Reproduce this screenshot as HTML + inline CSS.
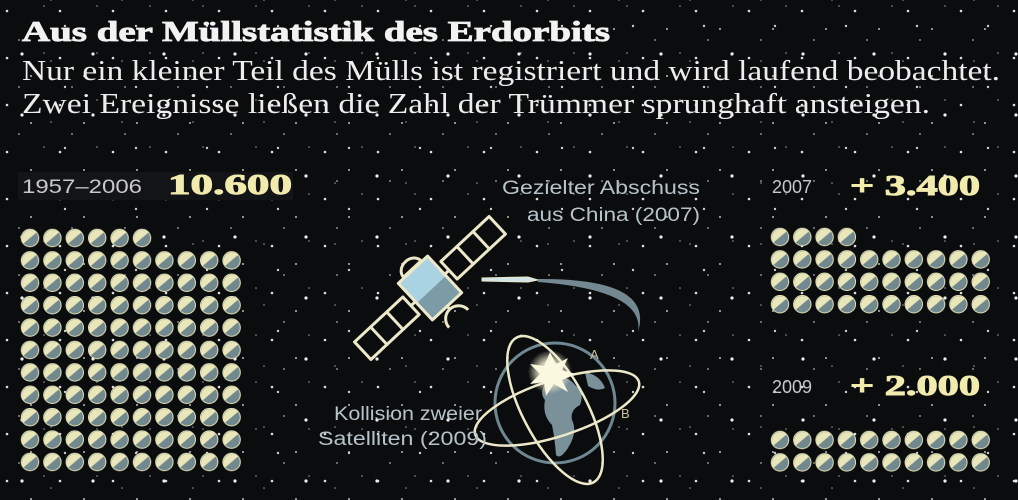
<!DOCTYPE html>
<html><head><meta charset="utf-8"><style>
html,body{margin:0;padding:0;background:#0a0c0e;}
svg{display:block}
</style></head><body>
<svg width="1018" height="500" viewBox="0 0 1018 500" xmlns="http://www.w3.org/2000/svg">
<defs>
<g id="dot">
<circle cx="11.2" cy="11.2" r="8.7" fill="#72888f" stroke="#e6e3b6" stroke-width="1"/>
<path d="M4.6 16.8 A8.7 8.7 0 0 1 17.8 5.6 Z" fill="#e9e6b9"/>
</g>
<pattern id="pL" x="18.8" y="226.8" width="22.4" height="22.4" patternUnits="userSpaceOnUse"><use href="#dot"/></pattern>
<pattern id="pR" x="768.8" y="225.8" width="22.3" height="22.4" patternUnits="userSpaceOnUse"><use href="#dot"/></pattern>
<pattern id="pR2" x="768.8" y="428.8" width="22.3" height="22.4" patternUnits="userSpaceOnUse"><use href="#dot"/></pattern>
<pattern id="stars1" x="0" y="0" width="53" height="47" patternUnits="userSpaceOnUse">
<circle cx="7" cy="11" r="1.3" fill="#ddd"/><circle cx="31" cy="29" r="1" fill="#bbb"/><circle cx="44" cy="6" r="0.8" fill="#999"/><circle cx="19" cy="40" r="0.9" fill="#aaa"/>
</pattern>
<pattern id="stars2" x="13" y="9" width="71" height="61" patternUnits="userSpaceOnUse">
<circle cx="9" cy="45" r="1.6" fill="#eee"/><circle cx="52" cy="17" r="1.2" fill="#ccc"/><circle cx="38" cy="52" r="0.8" fill="#999"/>
</pattern>
<radialGradient id="flash"><stop offset="0" stop-color="#fffdf0"/><stop offset="0.5" stop-color="#fbf6d8" stop-opacity="0.8"/><stop offset="1" stop-color="#fbf6d8" stop-opacity="0"/></radialGradient>
</defs>
<rect width="1018" height="500" fill="#0a0c0e"/>
<rect width="1018" height="500" fill="url(#stars1)"/>
<rect width="1018" height="500" fill="url(#stars2)"/>

<text x="22" y="41" font-family="Liberation Serif, serif" font-weight="bold" font-size="28" fill="#f2f2f0" stroke="#f2f2f0" stroke-width="0.8" textLength="588" lengthAdjust="spacingAndGlyphs">Aus der Müllstatistik des Erdorbits</text>
<text x="22" y="80" font-family="Liberation Serif, serif" font-size="28" fill="#ededeb" textLength="978" lengthAdjust="spacingAndGlyphs">Nur ein kleiner Teil des Mülls ist registriert und wird laufend beobachtet.</text>
<text x="22" y="113" font-family="Liberation Serif, serif" font-size="28" fill="#ededeb" textLength="908" lengthAdjust="spacingAndGlyphs">Zwei Ereignisse ließen die Zahl der Trümmer sprunghaft ansteigen.</text>

<rect x="18" y="172" width="275" height="28" fill="#121416"/>
<text x="22" y="193" font-family="Liberation Sans, sans-serif" font-size="19" fill="#c8c8c8" textLength="120" lengthAdjust="spacingAndGlyphs">1957–2006</text>
<text x="168" y="194" font-family="Liberation Serif, serif" font-weight="bold" font-size="29" fill="#f1ebae" stroke="#f1ebae" stroke-width="1" textLength="124" lengthAdjust="spacingAndGlyphs">10.600</text>

<rect x="18.8" y="226.8" width="134.4" height="22.4" fill="url(#pL)"/>
<rect x="18.8" y="249.2" width="224" height="224" fill="url(#pL)"/>

<text x="772" y="193" font-family="Liberation Sans, sans-serif" font-size="18" fill="#c8c8c8">2007</text>
<text x="850" y="195" font-family="Liberation Serif, serif" font-weight="bold" font-size="29" fill="#f1ebae" stroke="#f1ebae" stroke-width="1" textLength="130" lengthAdjust="spacingAndGlyphs">+ 3.400</text>
<rect x="768.8" y="225.8" width="89.2" height="22.4" fill="url(#pR)"/>
<rect x="768.8" y="248.2" width="223" height="67.2" fill="url(#pR)"/>

<text x="772" y="393" font-family="Liberation Sans, sans-serif" font-size="18" fill="#c8c8c8">2009</text>
<text x="850" y="395" font-family="Liberation Serif, serif" font-weight="bold" font-size="29" fill="#f1ebae" stroke="#f1ebae" stroke-width="1" textLength="130" lengthAdjust="spacingAndGlyphs">+ 2.000</text>
<rect x="768.8" y="428.8" width="223" height="44.8" fill="url(#pR2)"/>

<text x="502" y="194" font-family="Liberation Sans, sans-serif" font-size="19" fill="#b6c3c9" textLength="198" lengthAdjust="spacingAndGlyphs">Gezielter Abschuss</text>
<text x="527" y="221" font-family="Liberation Sans, sans-serif" font-size="19" fill="#b6c3c9" textLength="173" lengthAdjust="spacingAndGlyphs">aus China (2007)</text>

<!-- satellite -->
<g transform="translate(430 288) rotate(-43)" stroke="#ece8c8" stroke-width="3" fill="none" stroke-linejoin="round">
<rect x="26" y="-12" width="66" height="24" fill="#0a0c0e"/>
<line x1="48" y1="-12" x2="48" y2="12"/><line x1="70" y1="-12" x2="70" y2="12"/>
<rect x="-92" y="-12" width="66" height="24" fill="#0a0c0e"/>
<line x1="-48" y1="-12" x2="-48" y2="12"/><line x1="-70" y1="-12" x2="-70" y2="12"/>
<line x1="-26" y1="0" x2="-20" y2="0"/><line x1="20" y1="0" x2="26" y2="0"/>
<rect x="-20" y="-25" width="40" height="50" fill="#a9d2e2"/>
<rect x="-18.5" y="2" width="37" height="21.5" fill="#7b9ba7" stroke="none"/>
<path d="M-12 -26 A12 10 0 0 1 12 -26 Z" fill="#0a0c0e"/>
<path d="M-13 42 A13 13 0 0 1 13 42" />
<line x1="0" y1="25" x2="0" y2="29"/>
</g>

<!-- missile -->
<path d="M538 279 Q655 278 638 332 Q645 290 538 282 Z" fill="#7f96a0" opacity="0.9"/>
<path d="M482 278 L528 277 L538 280 L528 282 L482 281 Z" fill="#cfe3ea" stroke="#ece8c8" stroke-width="1"/>

<!-- earth -->
<circle cx="555" cy="403" r="60" fill="#0a0c0e" stroke="#6f8790" stroke-width="3"/>
<path d="M548 380 Q565 372 575 385 Q585 392 580 405 Q570 410 572 420 Q578 432 568 448 Q560 460 556 455 Q555 440 552 425 Q542 415 545 400 Q538 392 548 380 Z" fill="#7a919a"/>
<path d="M585 372 Q600 375 605 388 Q598 392 588 386 Z" fill="#7a919a"/>
<g fill="none" stroke="#ece8c8" stroke-width="2.5">
<ellipse cx="557" cy="408" rx="86" ry="28" transform="rotate(-18 557 408)"/>
<ellipse cx="555" cy="410" rx="82" ry="32" transform="rotate(62 555 410)"/>
</g>
<circle cx="550" cy="372" r="22" fill="url(#flash)"/>
<path d="M550 352 L556 364 L568 358 L562 370 L576 374 L562 380 L568 392 L554 384 L546 396 L544 382 L530 384 L540 374 L530 364 L544 366 Z" fill="#fbf8e0"/>
<text x="590" y="359" font-family="Liberation Sans, sans-serif" font-size="13" fill="#c9c4a0">A</text>
<text x="621" y="418" font-family="Liberation Sans, sans-serif" font-size="13" fill="#c9c4a0">B</text>

<text x="334" y="420" font-family="Liberation Sans, sans-serif" font-size="19" fill="#b6c3c9" textLength="148" lengthAdjust="spacingAndGlyphs">Kollision zweier</text>
<text x="318" y="445" font-family="Liberation Sans, sans-serif" font-size="19" fill="#b6c3c9" textLength="169" lengthAdjust="spacingAndGlyphs">Satelliten (2009)</text>
</svg>
</body></html>
